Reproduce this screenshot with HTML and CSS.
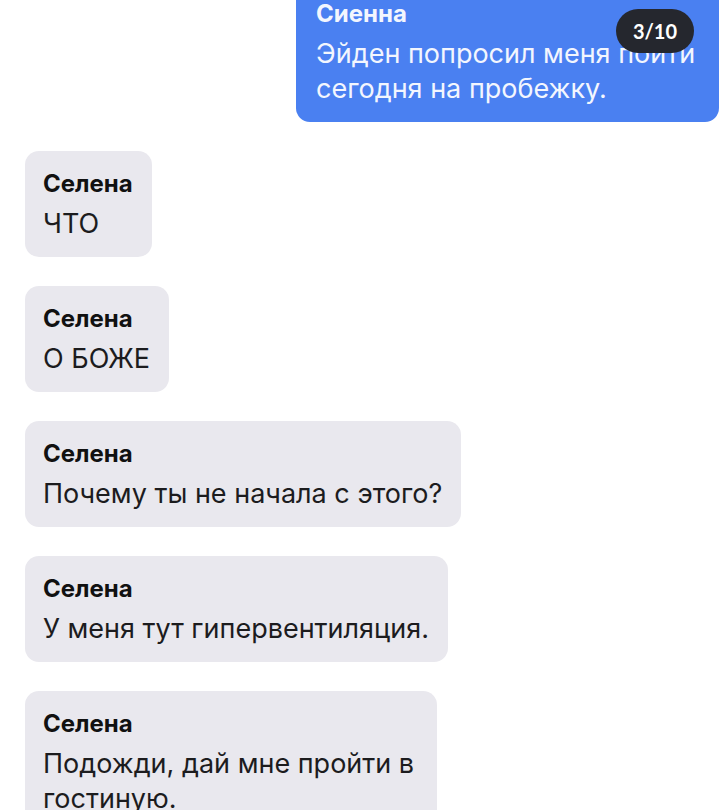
FILE: index.html
```html
<!DOCTYPE html>
<html lang="ru">
<head>
    <meta charset="UTF-8">
    <meta name="viewport" content="width=device-width, initial-scale=1.0">
    <title>Чат</title>
    <link rel="stylesheet" href="styles.css">
</head>
<body>

<main class="chat">
    <div class="bubble bubble-out">
        <div class="sender">Сиенна</div>
        <p class="text">Эйден попросил меня пойти сегодня на пробежку.</p>
        <span class="counter">3/10</span>
    </div>

    <div class="bubble bubble-in">
        <div class="sender">Селена</div>
        <p class="text">ЧТО</p>
    </div>

    <div class="bubble bubble-in">
        <div class="sender">Селена</div>
        <p class="text">О БОЖЕ</p>
    </div>

    <div class="bubble bubble-in">
        <div class="sender">Селена</div>
        <p class="text">Почему ты не начала с этого?</p>
    </div>

    <div class="bubble bubble-in">
        <div class="sender">Селена</div>
        <p class="text">У меня тут гипервентиляция.</p>
    </div>

    <div class="bubble bubble-in bubble-narrow">
        <div class="sender">Селена</div>
        <p class="text">Подожди, дай мне пройти в гостиную.</p>
    </div>
</main>

</body>
</html>
```

FILE: styles.css
```css
body {
    font-family: 'Inter', 'Noto Sans', sans-serif;
    margin: 0;
    padding: 0;
    background-color: #fff;
    color: #111;
    overflow: hidden;
}

.chat {
    display: flex;
    flex-direction: column;
    align-items: flex-start;
    gap: 29px;
    padding: 0 1px 0 25px;
}

.bubble {
    position: relative;
    box-sizing: border-box;
    padding: 19px 19px 16px 18px;
    border-radius: 14px;
}

.sender {
    font-size: 24px;
    line-height: 28px;
    font-weight: 700;
}

.text {
    margin: 8px 0 0;
    font-size: 27px;
    line-height: 35px;
    color: #1c1c1e;
}

.bubble-in {
    background-color: #e9e8ee;
    max-width: 444px;
}

.bubble-narrow {
    max-width: 412px;
}

.bubble-out {
    align-self: flex-end;
    width: 423px;
    margin-top: -19px;
    padding-left: 20px;
    padding-right: 10px;
    background-color: #4a80f1;
    color: #f3f6fe;
}

.bubble-out .text {
    color: #f3f6fe;
}

.counter {
    position: absolute;
    left: 320px;
    top: 28px;
    width: 78px;
    height: 44px;
    border-radius: 22px;
    background-color: #25272e;
    color: #fff;
    font-family: 'Lato', sans-serif;
    font-weight: 700;
    font-size: 20px;
    line-height: 44px;
    text-align: center;
}
```
